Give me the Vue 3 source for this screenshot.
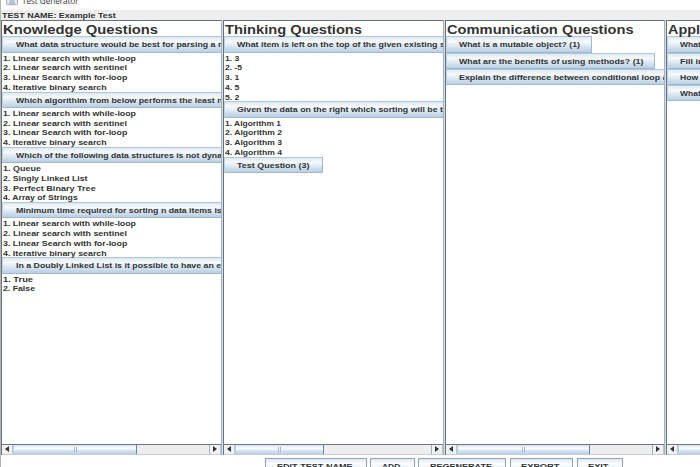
<script setup>
import { h } from 'vue'

const Label = (p) =>
  h('svg', { width: p.w + 2, height: p.h, style: { overflow: 'visible', display: 'block', flex: 'none' } }, [
    h('text', {
      x: 0, y: p.base, 'font-size': p.size, textLength: p.w, lengthAdjust: 'spacingAndGlyphs',
      'font-family': p.family || '"Liberation Sans", Arial, sans-serif',
      'font-weight': p.weight || 700, fill: '#333'
    }, p.text)
  ])
Label.props = ['text', 'w', 'h', 'base', 'size', 'family', 'weight']

const search = [
  ['1. Linear search with while-loop', 133], ['2. Linear search with sentinel', 124],
  ['3. Linear Search with for-loop', 124.3], ['4. Iterative binary search', 103.7]
]
const columns = [
  {
    title: 'Knowledge Questions', tw: 155, thumb: 124, pad: 12.6,
    questions: [
      { q: 'What data structure would be best for parsing a r', w: 205.4, a: search },
      { q: 'Which algorithim from below performs the least n', w: 206.6, a: search },
      { q: 'Which of the following data structures is not dyna', w: 206, a: [['1. Queue', 38], ['2. Singly Linked List', 84.5], ['3. Perfect Binary Tree', 92.7], ['4. Array of Strings', 74.7]] },
      { q: 'Minimum time required for sorting n data items is', w: 205.7, a: search },
      { q: 'In a Doubly Linked List is it possible to have an e', w: 205.2, a: [['1. True', 30], ['2. False', 32]] }
    ]
  },
  {
    title: 'Thinking Questions', tw: 137, thumb: 89, pad: 12.2,
    questions: [
      { q: 'What item is left on the top of the given existing s', w: 207.8, a: [['1. 3', 14.4], ['2. -5', 17], ['3. 1', 14.2], ['4. 5', 14.4], ['5. 2', 14.4]] },
      { q: 'Given the data on the right which sorting will be t', w: 206, a: [['1. Algorithm 1', 56], ['2. Algorithm 2', 57], ['3. Algorithm 3', 57], ['4. Algorithm 4', 57]] },
      { q: 'Test Question (3)', w: 72.5, bw: 98.8, a: [] }
    ]
  },
  {
    title: 'Communication Questions', tw: 186.6, thumb: 133.5, pad: 11.8,
    questions: [
      { q: 'What is a mutable object? (1)', w: 121, bw: 146.3, a: [] },
      { q: 'What are the benefits of using methods? (1)', w: 184.5, bw: 209.3, a: [] },
      { q: 'Explain the difference between conditional loop a', w: 208.6, a: [] }
    ]
  },
  {
    title: 'Appl', tw: 32, thumb: 100, pad: 11.8,
    questions: [
      { q: 'What', w: 20.8, a: [] }, { q: 'Fill in', w: 23.5, a: [] },
      { q: 'How', w: 18.3, a: [] }, { q: 'What', w: 20.8, a: [] }
    ]
  }
]
const actions = [
  ['EDIT TEST NAME', 75.6, 101.4], ['ADD', 18.3, 44.5], ['REGENERATE', 62, 88],
  ['EXPORT', 38.6, 63], ['EXIT', 20.5, 46]
]
</script>

<template>
  <div class="window">
    <header class="titlebar">
      <svg class="logo" width="12" height="6" viewBox="0 0 12 6">
        <path d="M.5 0v3.7q0 1 1 1h9q1 0 1-1V0" fill="#e9edf1" stroke="#a0a7ae" />
        <path d="M3 3h6M3.5 1h5" stroke="#8195a8" />
      </svg>
      <Label text="Test Generator" :w="56.5" :h="10" :base="3.6" :size="8.8" :weight="400" family="'Open Sans', sans-serif" />
    </header>
    <div class="testname"><Label text="TEST NAME: Example Test" :w="113.6" :h="10" :base="8" :size="8.1" /></div>
    <main class="columns">
      <section v-for="c in columns" :key="c.title" class="column">
        <div class="view">
          <div class="heading"><Label :text="c.title" :w="c.tw" :h="15.5" :base="12.8" :size="13.6" /></div>
          <template v-for="(q, i) in c.questions" :key="i">
            <div class="question" :style="{ width: q.bw ? q.bw + 'px' : '300px', paddingLeft: c.pad + 'px' }">
              <Label :text="q.q" :w="q.w" :h="14" :base="10.1" :size="8.1" />
            </div>
            <div v-for="a in q.a" :key="a[0]" class="answer">
              <Label :text="a[0]" :w="a[1]" :h="9.75" :base="7.8" :size="8.1" />
            </div>
          </template>
        </div>
        <div class="scrollbar">
          <span class="arrow"><svg width="4" height="6"><path d="M4 0v6L0 3z" fill="#333" /></svg></span>
          <span class="track"><span class="thumb" :style="{ width: c.thumb + 'px' }"><i /><i /></span></span>
          <span class="arrow"><svg width="4" height="6"><path d="M0 0v6l4-3z" fill="#333" /></svg></span>
        </div>
      </section>
    </main>
    <footer class="actions">
      <button v-for="a in actions" :key="a[0]" :style="{ width: a[2] + 'px' }">
        <Label :text="a[0]" :w="a[1]" :h="14" :base="9.7" :size="8.1" />
      </button>
    </footer>
  </div>
</template>

<style>
body { margin: 0; overflow: hidden; }
</style>

<style scoped>
.window { box-sizing: border-box; width: 700px; height: 467px; overflow: hidden; background: #fff; border-left: 1px solid #b4b4b4; }
.titlebar { display: flex; gap: 4px; height: 10px; padding-left: 5px; background: #fff; }
.testname { height: 10px; padding-left: .7px; background: #eee; }
.columns { display: flex; gap: 1px; height: 434.5px; padding-left: .4px; background: #d5dee6; }
.column { box-sizing: border-box; flex: none; width: 220.7px; display: flex; flex-direction: column; border: solid #66727c; border-width: 1px 1px 0 1px; border-right-color: #a3b3c1; }
.view { box-sizing: border-box; height: 423.5px; overflow: hidden; background: #fff; border-bottom: 1px solid #6f7780; }
.heading { height: 15.3px; padding-left: 1px; }
.question { box-sizing: border-box; height: 16.25px; border: 1px solid #a3b8cc; border-left-color: #c3d2e1; border-top-color: #b3c5d8; background: linear-gradient(#dde8f3, #f6fafd 30%, #e0eaf4 55%, #b8cfe5); }
.answer { height: 9.75px; padding-left: .7px; }
.scrollbar { display: flex; height: 10px; background: #eee; box-sizing: border-box; border-bottom: 1px solid #c5ced8; }
.arrow { box-sizing: border-box; display: flex; align-items: center; justify-content: center; width: 11px; flex: none; background: #f0f1f2; border-right: 1px solid #b9c8d8; }
.track { flex: 1; overflow: hidden; border-right: 1px solid #9fb1c3; }
.thumb { box-sizing: border-box; display: flex; gap: 1px; justify-content: center; align-items: center; height: 9px; border-right: 1px solid #6382bf; border-left: 1px solid #b8cfe5; background: linear-gradient(#d0dfef, #fff 35%, #dce8f4 60%, #b8cfe5); }
.thumb i { width: 1px; height: 5px; background: #a3b8dc; }
.actions { display: flex; gap: 3.6px; padding: 3.5px 0 0 264.3px; }
.actions button { display: flex; justify-content: center; box-sizing: border-box; flex: none; height: 17px; padding: 0; border: 1px solid #8fa3b5; background: linear-gradient(#dde8f3, #fff 35%, #e4edf6 60%, #b8cfe5); }
</style>
